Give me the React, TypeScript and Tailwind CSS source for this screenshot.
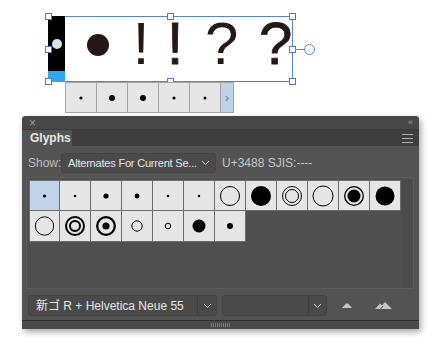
type Kind =
  | { t: "dot"; r: number }
  | { t: "ring"; r: number; w: number }
  | { t: "double"; r1: number; r2: number; w: number }
  | { t: "eye"; r1: number; r2: number; w: number };

const INK = "#000";

function GlyphMark({ k, size = 30 }: { k: Kind; size?: number }) {
  const c = size / 2;
  return (
    <svg width={size} height={size} viewBox={`0 0 ${size} ${size}`}>
      {k.t === "dot" && <circle cx={c} cy={c} r={k.r} fill={INK} />}
      {k.t === "ring" && <circle cx={c} cy={c} r={k.r} fill="none" stroke={INK} strokeWidth={k.w} />}
      {k.t === "double" && (
        <>
          <circle cx={c} cy={c} r={k.r1} fill="none" stroke={INK} strokeWidth={k.w} />
          <circle cx={c} cy={c} r={k.r2} fill="none" stroke={INK} strokeWidth={k.w} />
        </>
      )}
      {k.t === "eye" && (
        <>
          <circle cx={c} cy={c} r={k.r1} fill="none" stroke={INK} strokeWidth={k.w} />
          <circle cx={c} cy={c} r={k.r2} fill={INK} />
        </>
      )}
    </svg>
  );
}

const row1: Kind[] = [
  { t: "dot", r: 1.6 },
  { t: "dot", r: 1.3 },
  { t: "dot", r: 2.6 },
  { t: "dot", r: 2.4 },
  { t: "dot", r: 1.3 },
  { t: "dot", r: 1.2 },
  { t: "ring", r: 9.5, w: 1 },
  { t: "dot", r: 10 },
  { t: "double", r1: 9.5, r2: 6.5, w: 1 },
  { t: "ring", r: 10, w: 1 },
  { t: "eye", r1: 9.3, r2: 6.5, w: 1.3 },
  { t: "dot", r: 9.5 },
];

const row2: Kind[] = [
  { t: "ring", r: 9.5, w: 1 },
  { t: "double", r1: 9, r2: 5, w: 2 },
  { t: "eye", r1: 8.8, r2: 3.6, w: 2.3 },
  { t: "ring", r: 5.2, w: 1 },
  { t: "ring", r: 2.8, w: 1 },
  { t: "dot", r: 6.5 },
  { t: "dot", r: 3 },
];

const popup: Kind[] = [
  { t: "dot", r: 1.6 },
  { t: "dot", r: 3 },
  { t: "dot", r: 3 },
  { t: "dot", r: 1.6 },
  { t: "dot", r: 1.5 },
];

function Handle({ className }: { className: string }) {
  return <div className={`absolute h-[7px] w-[7px] border border-[#4d79d1] bg-white ${className}`} />;
}

function Chevron() {
  return (
    <svg width="9" height="6" viewBox="0 0 9 6">
      <path d="M1 1 L4.5 4.5 L8 1" fill="none" stroke="#cfcfcf" strokeWidth="1" />
    </svg>
  );
}

function GridRow({ items, top, selected }: { items: Kind[]; top?: boolean; selected?: number }) {
  return (
    <div className="flex">
      {items.map((k, i) => (
        <div
          key={i}
          className={`flex h-[31px] w-[31px] items-center justify-center border-b border-r border-[#6c6c6c] ${
            i === 0 ? "border-l" : ""
          } ${top ? "border-t" : ""} ${i === selected ? "bg-[#bfd4ea]" : "bg-[#e6e6e6]"}`}
        >
          <GlyphMark k={k} />
        </div>
      ))}
    </div>
  );
}

export default function App() {
  const sans = { fontFamily: '"Liberation Sans", "Noto Sans CJK JP", sans-serif' };
  return (
    <div className="h-[343px] w-[439px] overflow-hidden bg-white" style={sans}>
      {/* text frame on the artboard */}
      <div className="pl-[48px] pt-[16px]">
        <div className="relative flex h-[66px] w-[245px] border border-[#5a84d6]">
          <div className="-ml-px -mt-px flex h-[66px] w-[17px] flex-col">
            <div className="flex flex-1 items-center justify-center bg-black">
              <div className="h-[10px] w-[10px] rounded-full bg-[#dbe1e6]" />
            </div>
            <div className="h-[11px] bg-[#2fa6ef]" />
          </div>
          <div className="flex items-start text-[60px] leading-none text-[#231815]">
            <div className="ml-[18px] mt-[17px]">
              <svg width="30" height="22" viewBox="0 0 30 22">
                <circle cx="15" cy="11" r="11" fill="#231815" />
              </svg>
            </div>
            <span className="-mt-[3px] ml-[13px] w-[30px] text-center">!</span>
            <span className="-mt-[3px] ml-[4px] w-[30px] text-center [-webkit-text-stroke:0.8px_#231815]">!</span>
            <span className="-mt-[3px] ml-[15px] w-[30px] text-center">?</span>
            <span className="-mt-[3px] ml-[24px] w-[30px] text-center [-webkit-text-stroke:0.8px_#231815]">?</span>
          </div>
          <Handle className="-left-[4px] -top-[4px]" />
          <Handle className="left-[118px] -top-[4px]" />
          <Handle className="-right-[4px] -top-[4px]" />
          <Handle className="-left-[4px] top-[29px]" />
          <Handle className="-right-[4px] top-[29px]" />
          <Handle className="-bottom-[4px] -left-[4px]" />
          <Handle className="-bottom-[4px] left-[118px]" />
          <Handle className="-bottom-[4px] -right-[4px]" />
          <div className="absolute -right-[14px] top-[32px] h-px w-[11px] bg-[#5a84d6]" />
          <div className="absolute -right-[23px] top-[27px] h-[11px] w-[11px] rounded-full border border-[#5a84d6] bg-white" />
        </div>
      </div>

      {/* alternates popup */}
      <div className="relative ml-[65px] flex h-[31px] w-[169px] border border-[#a3a3a3] bg-[#e6e6e6]">
        {popup.map((k, i) => (
          <div key={i} className="flex w-[31px] items-center justify-center border-r border-[#a3a3a3]">
            <GlyphMark k={k} />
          </div>
        ))}
        <div className="flex flex-1 items-center justify-center bg-[#bcd3e8] text-[13px] text-[#6f7f90]">›</div>
      </div>

      {/* Glyphs panel */}
      <div className="ml-[22px] mt-[3px] w-[397px] rounded-t-[4px] bg-[#535353] shadow-[2px_3px_6px_rgba(0,0,0,0.35)]">
        <div className="flex h-[14px] items-center justify-between rounded-t-[4px] border-b border-[#3a3a3a] bg-[#474747] px-[7px] text-[#9c9c9c]">
          <span className="text-[12px] leading-none">×</span>
          <span className="text-[9px] leading-none tracking-[-1px]">‹‹</span>
        </div>
        <div className="flex h-[16px] items-stretch justify-between bg-[#3e3e3e]">
          <div className="flex w-[50px] items-center bg-[#535353] pl-[8px] text-[12px] font-bold text-[#e8e8e8]">
            Glyphs
          </div>
          <div className="mr-[6px] flex flex-col justify-center gap-[3px]">
            <div className="h-px w-[11px] bg-[#b0b0b0]" />
            <div className="h-px w-[11px] bg-[#b0b0b0]" />
            <div className="h-px w-[11px] bg-[#b0b0b0]" />
          </div>
        </div>

        <div className="mt-[7px] flex h-[20px] items-center whitespace-nowrap pl-[6px] text-[12px]">
          <span className="w-[33px] text-[#bdbdbd]">Show:</span>
          <div className="flex h-[20px] w-[155px] items-center justify-between overflow-hidden rounded-[3px] border border-[#444] bg-[#4a4a4a] pl-[6px] pr-[5px]">
            <span className="text-[11px] tracking-[-0.2px] text-[#e6e6e6]">Alternates For Current Se...</span>
            <Chevron />
          </div>
          <span className="ml-[6px] text-[#c6c6c6]">U+3488 SJIS:----</span>
        </div>

        <div className="ml-[4px] mt-[4px] flex h-[112px] w-[388px] border border-[#5c5c5c] bg-[#505050] pl-[2px] pt-[2px]">
          <div className="flex flex-col">
            <GridRow items={row1} top selected={0} />
            <GridRow items={row2} />
          </div>
          <div className="ml-[1px] w-[10px] bg-[#4c4c4c]" />
        </div>

        <div className="ml-[6px] mt-[6px] flex h-[21px] items-center whitespace-nowrap text-[12px]">
          <div className="flex h-[21px] w-[189px] items-stretch rounded-[3px] border border-[#444] bg-[#4a4a4a]">
            <span className="flex flex-1 items-center pl-[7px] text-[#e6e6e6]">新ゴ R + Helvetica Neue 55</span>
            <span className="flex w-[19px] items-center justify-center border-l border-[#3e3e3e]">
              <Chevron />
            </span>
          </div>
          <div className="ml-[5px] flex h-[21px] w-[105px] items-stretch rounded-[3px] border border-[#444] bg-[#4a4a4a]">
            <span className="flex-1" />
            <span className="flex w-[18px] items-center justify-center border-l border-[#3e3e3e]">
              <Chevron />
            </span>
          </div>
          <svg className="ml-[15px]" width="10" height="5" viewBox="0 0 10 5">
            <path d="M0 5 L4 0.5 L6 0.5 L10 5 Z" fill="#c4c4c4" />
          </svg>
          <svg className="ml-[23px]" width="17" height="7" viewBox="0 0 17 7">
            <path d="M0 7 L5 1.5 L7 3.5 L10 0 L17 7 Z" fill="#c4c4c4" />
            <path d="M5.5 7 L8 4" stroke="#535353" strokeWidth="1" />
          </svg>
        </div>

        <div className="mt-[4px] h-px bg-[#2e2e2e]" />
        <div className="flex h-[8px] items-center justify-center bg-[#4a4a4a]">
          <div className="flex gap-[1px]">
            {Array.from({ length: 10 }).map((_, i) => (
              <div key={i} className="h-[4px] w-px bg-[#7a7a7a]" />
            ))}
          </div>
        </div>
      </div>
    </div>
  );
}
